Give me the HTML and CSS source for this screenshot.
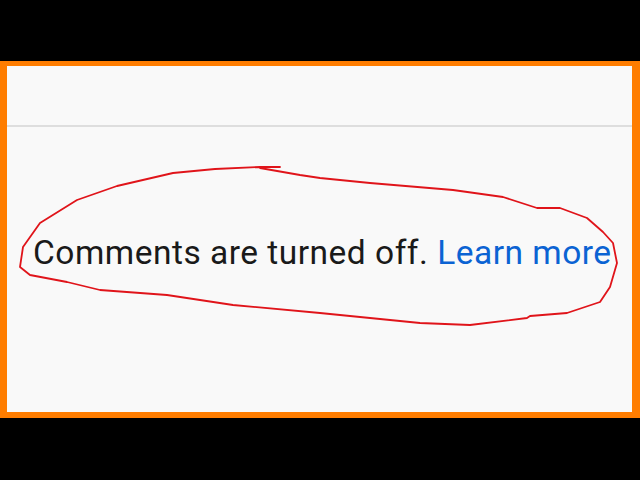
FILE: index.html
```html
<!DOCTYPE html>
<html lang="en">
<head>
    <meta charset="UTF-8">
    <title>Comments are turned off</title>
    <link rel="stylesheet" href="styles.css">
</head>
<body>
    <div class="frame">
        <div class="top-bar"></div>
        <div class="comments">
            <p class="notice">Comments are turned off. <a href="#">Learn more</a></p>
        </div>
    </div>

    <!-- hand-drawn circle over the notice -->
    <svg class="scribble" width="640" height="480" viewBox="0 0 640 480">
        <path d="M280 167 L260 167 L215 169 L173 173 L117 186 L77 200 L40 223 L23 247 L20 267 L30 275 L67 282 L100 290 L167 295 L233 305 L320 313 L370 318 L420 323 L470 325 L527 318 L530 316 L567 313 L600 302 L610 287 L617 263 L613 243 L603 232 L587 218 L560 208 L537 208 L503 197 L453 190 L370 183 L320 178 L300 175 L260 168"
              fill="none" stroke="#e0141a" stroke-width="1.8" stroke-linejoin="round" stroke-linecap="round"/>
    </svg>
</body>
</html>
```

FILE: styles.css
```css
* {
    margin: 0;
    padding: 0;
    box-sizing: border-box;
}
body {
    background: #000;
    width: 640px;
    height: 480px;
    overflow: hidden;
    position: relative;
    font-family: Roboto, 'Liberation Sans', sans-serif;
}
.frame {
    margin-top: 61px;
    height: 357px;
    border-style: solid;
    border-color: #ff7d00;
    border-width: 5px 8px 6px 7px;
    background: #f9f9f9;
    display: flex;
    flex-direction: column;
}
.top-bar {
    height: 61px;
    border-bottom: 2px solid #dedede;
}
.comments {
    padding: 106px 0 0 26px;
}
.notice {
    font-size: 33.5px;
    letter-spacing: 0.5px;
    line-height: 40px;
    color: #1a1a1a;
    white-space: nowrap;
}
.notice a {
    color: #0b63d3;
    text-decoration: none;
}
.scribble {
    position: absolute;
    top: 0;
    left: 0;
    pointer-events: none;
}
```
